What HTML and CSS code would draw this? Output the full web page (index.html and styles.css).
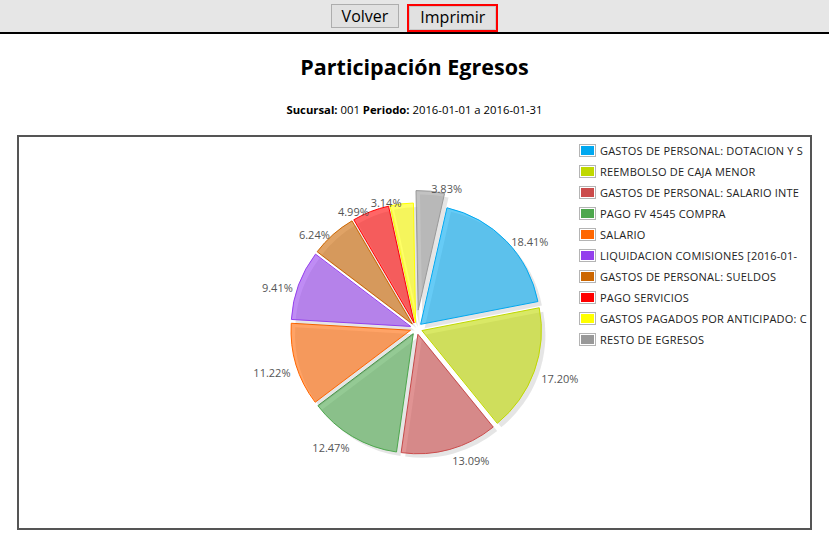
FILE: index.html
```html
<!DOCTYPE html>
<html lang="es">
<head>
<meta charset="utf-8">
<title>Participación Egresos</title>
<link rel="stylesheet" href="styles.css">
</head>
<body>
<div class="topbar">
  <button class="btn">Volver</button>
  <button class="btn btn-focus">Imprimir</button>
</div>
<h1 class="title">Participación Egresos</h1>
<p class="subtitle"><b>Sucursal:</b> 001 <b>Periodo:</b> 2016-01-01 a 2016-01-31</p>
<div class="chart">
  <svg class="pie" width="791" height="391" viewBox="19 137 791 391" xmlns="http://www.w3.org/2000/svg">
    <defs>
      <path id="s1" d="M420.61,324.32 L446.96,207.77 A119.5,119.5 0 0 1 537.92,301.55 Z"/>
      <path id="s2" d="M421.94,330.55 L539.25,307.78 A119.5,119.5 0 0 1 497.25,423.34 Z"/>
      <path id="s3" d="M417.90,334.28 L493.21,427.07 A119.5,119.5 0 0 1 401.15,452.60 Z"/>
      <path id="s4" d="M413.25,333.67 L396.50,451.99 A119.5,119.5 0 0 1 317.88,405.67 Z"/>
      <path id="s5" d="M410.56,330.24 L315.18,402.24 A119.5,119.5 0 0 1 291.26,323.27 Z"/>
      <path id="s6" d="M410.67,326.42 L291.38,319.45 A119.5,119.5 0 0 1 315.51,254.14 Z"/>
      <path id="s7" d="M412.32,324.01 L317.16,251.73 A119.5,119.5 0 0 1 352.00,220.85 Z"/>
      <path id="s8" d="M414.12,322.91 L353.80,219.75 A119.5,119.5 0 0 1 388.55,206.18 Z"/>
      <path id="s9" d="M415.60,322.54 L390.04,205.81 A119.5,119.5 0 0 1 413.41,203.06 Z"/>
      <path id="s10" d="M418.18,310.10 L416.00,190.62 A119.5,119.5 0 0 1 444.54,193.54 Z"/>
    </defs>
    <g class="slice">
      <use href="#s1" class="shadow" transform="translate(4 4)"/>
      <use href="#s1" fill="#00a8f0" stroke="#00a8f0"/>
    </g>
    <g class="slice">
      <use href="#s2" class="shadow" transform="translate(4 4)"/>
      <use href="#s2" fill="#c0d800" stroke="#c0d800"/>
    </g>
    <g class="slice">
      <use href="#s3" class="shadow" transform="translate(4 4)"/>
      <use href="#s3" fill="#cb4b4b" stroke="#cb4b4b"/>
    </g>
    <g class="slice">
      <use href="#s4" class="shadow" transform="translate(4 4)"/>
      <use href="#s4" fill="#4da74d" stroke="#4da74d"/>
    </g>
    <g class="slice">
      <use href="#s5" class="shadow" transform="translate(4 4)"/>
      <use href="#s5" fill="#ff6600" stroke="#ff6600"/>
    </g>
    <g class="slice">
      <use href="#s6" class="shadow" transform="translate(4 4)"/>
      <use href="#s6" fill="#9440ed" stroke="#9440ed"/>
    </g>
    <g class="slice">
      <use href="#s7" class="shadow" transform="translate(4 4)"/>
      <use href="#s7" fill="#cc6600" stroke="#cc6600"/>
    </g>
    <g class="slice">
      <use href="#s8" class="shadow" transform="translate(4 4)"/>
      <use href="#s8" fill="#ff0000" stroke="#ff0000"/>
    </g>
    <g class="slice">
      <use href="#s9" class="shadow" transform="translate(4 4)"/>
      <use href="#s9" fill="#ffff00" stroke="#ffff00"/>
    </g>
    <g class="slice">
      <use href="#s10" class="shadow" transform="translate(4 4)"/>
      <use href="#s10" fill="#999999" stroke="#999999"/>
    </g>
    <g class="labels">
      <text x="511.2" y="246">18.41%</text>
      <text x="541.2" y="383.3">17.20%</text>
      <text x="452.2" y="465">13.09%</text>
      <text x="349.5" y="452.3" class="end">12.47%</text>
      <text x="290.5" y="376.7" class="end">11.22%</text>
      <text x="292.8" y="292.3" class="end">9.41%</text>
      <text x="329.8" y="239" class="end">6.24%</text>
      <text x="368.8" y="215.7" class="end">4.99%</text>
      <text x="401.5" y="207.3" class="end">3.14%</text>
      <text x="431.2" y="193.3">3.83%</text>
    </g>
  </svg>
  <ul class="legend">
    <li><span class="box"><span class="swatch c1"></span></span>GASTOS DE PERSONAL: DOTACION Y S</li>
    <li><span class="box"><span class="swatch c2"></span></span>REEMBOLSO DE CAJA MENOR</li>
    <li><span class="box"><span class="swatch c3"></span></span>GASTOS DE PERSONAL: SALARIO INTE</li>
    <li><span class="box"><span class="swatch c4"></span></span>PAGO FV 4545 COMPRA</li>
    <li><span class="box"><span class="swatch c5"></span></span>SALARIO</li>
    <li><span class="box"><span class="swatch c6"></span></span>LIQUIDACION COMISIONES [2016-01-</li>
    <li><span class="box"><span class="swatch c7"></span></span>GASTOS DE PERSONAL: SUELDOS</li>
    <li><span class="box"><span class="swatch c8"></span></span>PAGO SERVICIOS</li>
    <li><span class="box"><span class="swatch c9"></span></span>GASTOS PAGADOS POR ANTICIPADO: C</li>
    <li><span class="box"><span class="swatch c10"></span></span>RESTO DE EGRESOS</li>
  </ul>
</div>
</body>
</html>
```

FILE: styles.css
```css
html, body {
  margin: 0;
  padding: 0;
  background: #ffffff;
  font-family: "Open Sans", "Noto Sans", sans-serif;
  color: #000;
}

.topbar {
  height: 32px;
  background: #e6e6e6;
  border-bottom: 2px solid #000;
  display: flex;
  justify-content: center;
  align-items: flex-start;
  gap: 8px;
}

.btn {
  margin-top: 4px;
  height: 24px;
  padding: 0 10px;
  font-family: "Open Sans", sans-serif;
  font-size: 16px;
  line-height: 22px;
  color: #000;
  background: #e1e1e1;
  border: 1px solid #adadad;
  border-radius: 0;
}

.btn-focus {
  height: 28px;
  padding: 0 11px 2px;
  border: 2px solid #ff0000;
  box-shadow: inset 0 0 0 1px #c9c9c9;
  line-height: 22px;
}

.title {
  margin: 18px 0 0;
  font-size: 21.5px;
  line-height: 29px;
  font-weight: 700;
  text-align: center;
}

.subtitle {
  margin: 22px 0 0;
  font-size: 11.3px;
  line-height: 14px;
  text-align: center;
}

.chart {
  position: relative;
  margin: 18px 17px 0;
  height: 391px;
  border: 2px solid #555555;
}

.pie {
  display: block;
}

.shadow {
  fill: rgba(0, 0, 0, 0.1);
  stroke: none;
}

.slice use + use {
  fill-opacity: 0.6;
  stroke-width: 1;
}

.labels text {
  font-family: "Open Sans", sans-serif;
  font-size: 11px;
  fill: #555555;
}

.labels text.end {
  text-anchor: end;
}

.legend {
  position: absolute;
  left: 560px;
  top: 3px;
  margin: 0;
  padding: 0;
  list-style: none;
}

.legend li {
  display: flex;
  align-items: center;
  height: 21px;
  font-size: 11px;
  letter-spacing: 0.2px;
  color: #222;
  white-space: nowrap;
}

.box {
  display: block;
  border: 1px solid #b4b4b4;
  padding: 1px;
  margin-right: 4px;
  background: #fff;
}

.swatch {
  display: block;
  width: 13px;
  height: 9px;
}

.c1 { background: #00a8f0; }
.c2 { background: #c0d800; }
.c3 { background: #cb4b4b; }
.c4 { background: #4da74d; }
.c5 { background: #ff6600; }
.c6 { background: #9440ed; }
.c7 { background: #cc6600; }
.c8 { background: #ff0000; }
.c9 { background: #ffff00; }
.c10 { background: #999999; }
```
